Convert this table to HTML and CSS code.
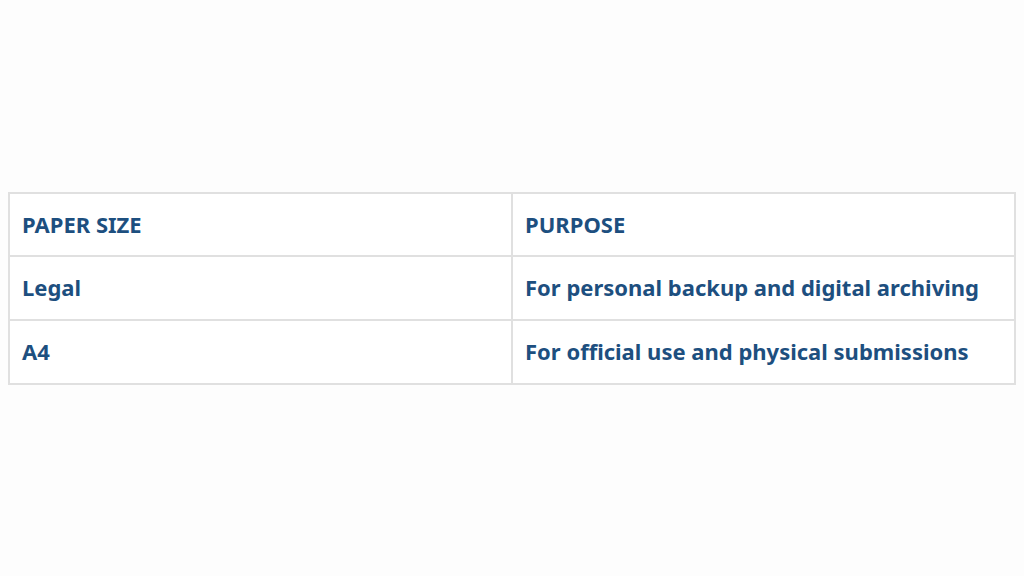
FILE: index.html
```html
<!DOCTYPE html>
<html lang="en">
<head>
<meta charset="utf-8">
<title>Paper sizes</title>
<link rel="stylesheet" href="styles.css">
</head>
<body>
<main class="page">
  <table class="sizes">
    <tr class="head"><td class="col-a">PAPER SIZE</td><td>PURPOSE</td></tr>
    <tr><td class="col-a">Legal</td><td>For personal backup and digital archiving</td></tr>
    <tr><td class="col-a">A4</td><td>For official use and physical submissions</td></tr>
  </table>
</main>
</body>
</html>
```

FILE: styles.css
```css
html, body {
  margin: 0;
  padding: 0;
  background: #fdfdfd;
}
.page {
  width: 1024px;
  height: 576px;
  padding: 192px 8px 0;
  box-sizing: border-box;
}
.sizes {
  width: 1008px;
  border-collapse: collapse;
  table-layout: fixed;
  background: #ffffff;
}
.sizes tr {
  height: 64px;
}
.sizes tr.head {
  height: 63px;
}
.sizes td {
  border: 2px solid #e0e0e0;
  padding: 0 12px 2px;
  box-sizing: border-box;
  font-family: "Noto Sans", sans-serif;
  font-weight: 700;
  font-size: 22px;
  line-height: 30px;
  color: #1d4f7f;
  vertical-align: middle;
  white-space: nowrap;
}
.sizes .col-a {
  width: 503px;
}
```
